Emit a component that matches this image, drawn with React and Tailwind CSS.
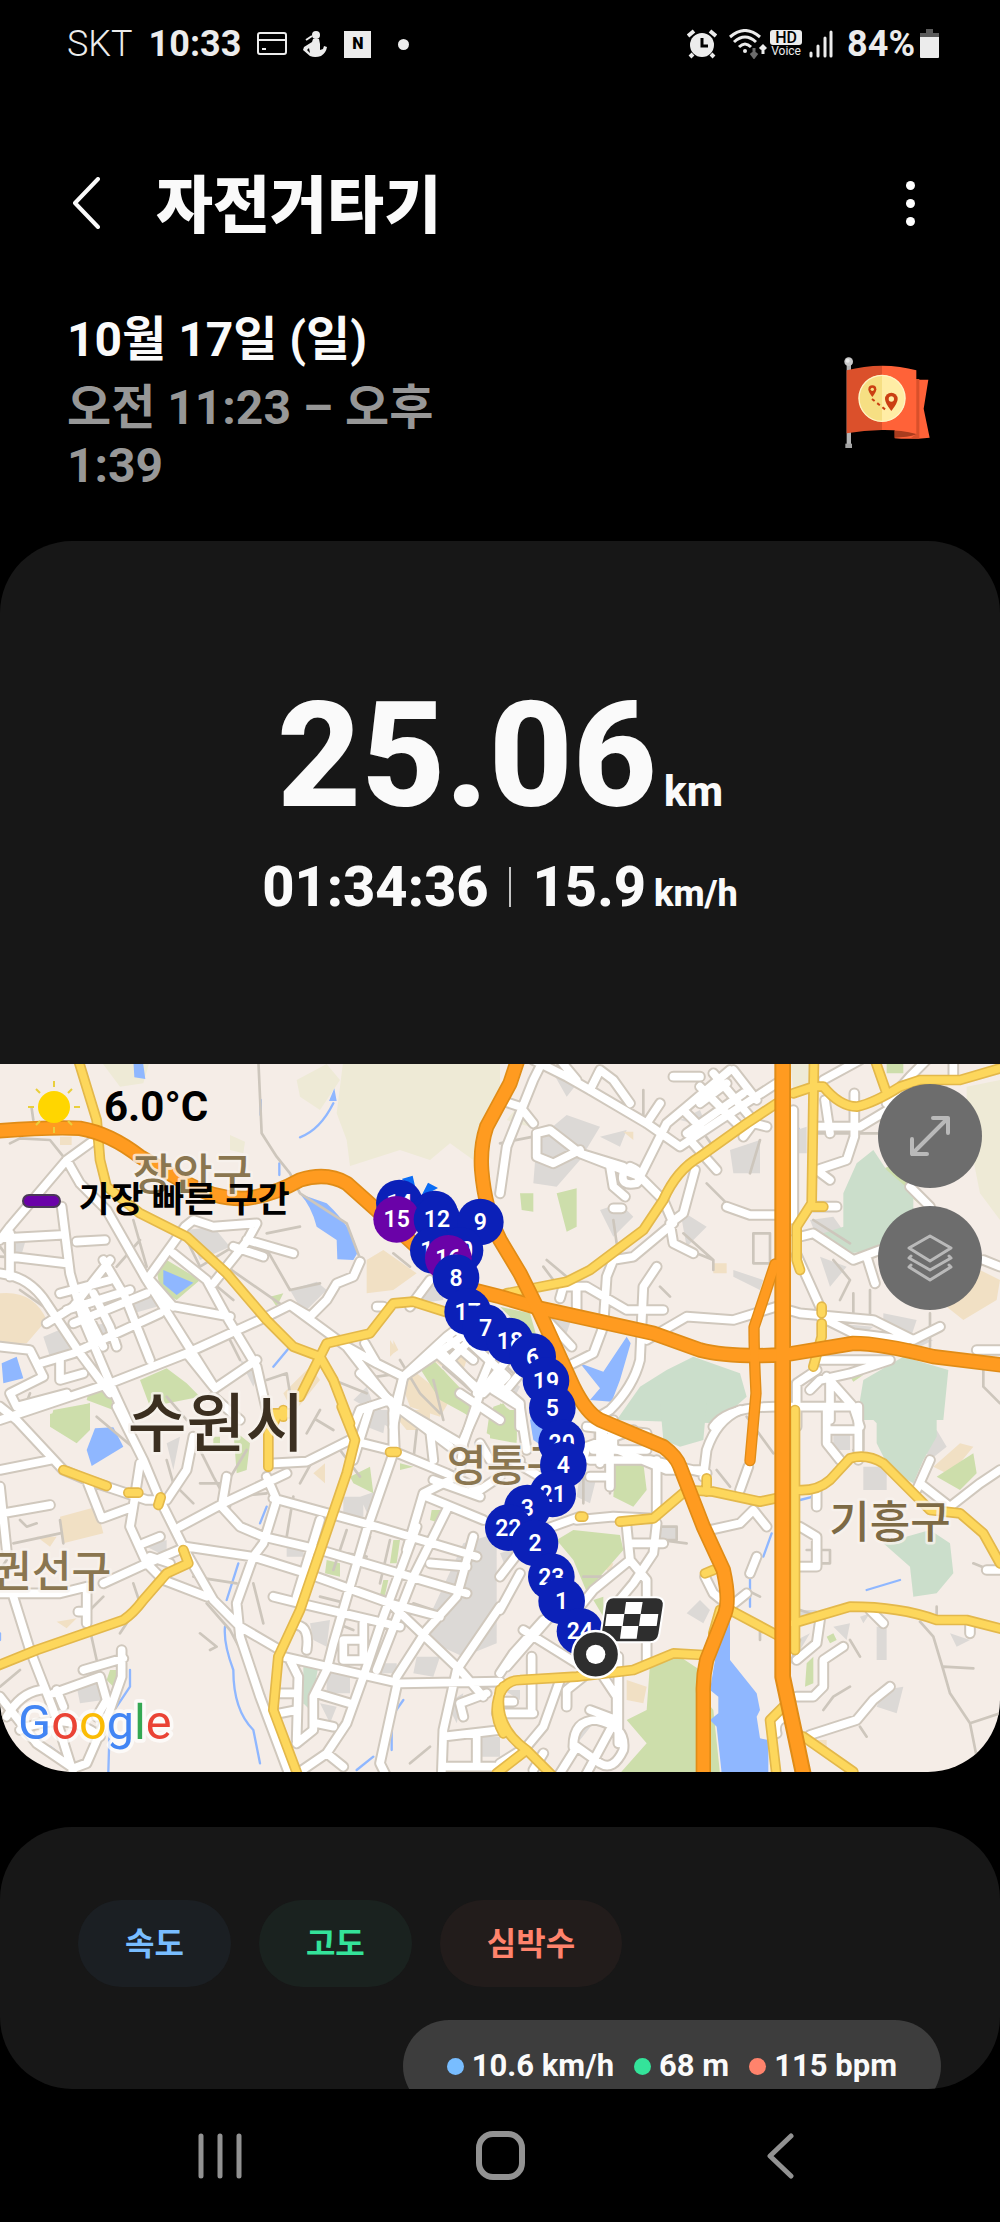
import { useState } from "react";

// The map is drawn on a 3000 x 2124 canvas that is cut into tiles
const tiles = [
  {
    at: "translate(0 -12)",
    khaki:
      "M1030 0H1500V100L1420 300 1350 250 1290 300 1200 270 1050 318 1040 240 1010 160ZM890 60L980 12 1020 60 960 150 900 110ZM300 0H450L430 70 360 80ZM690 225L735 245 730 280 690 270Z",
    tan: "M1100 600L1150 570 1250 640 1180 690 1100 700ZM0 700Q100 690 140 780L80 850 0 850ZM180 230H215V255H180ZM930 920L960 960 880 1060 850 1000ZM1340 860L1400 900 1380 960 1300 900ZM760 560L800 560 800 600ZM1180 840L1195 870 1180 880Z",
    gray: "M560 510L640 500 690 560 600 600ZM870 690L950 665 980 690 910 760ZM130 830L200 800 210 880 150 890ZM30 540L80 530 60 600ZM1250 680L1320 650 1330 720 1260 730ZM400 700L450 690 470 740 400 760ZM1090 860L1150 900 1200 930 1150 900ZM720 900L780 930 760 980ZM1060 1020L1100 980 1130 1060ZM250 800L320 790 330 840 260 850Z",
    green:
      "M1250 910L1330 930 1380 990 1430 1080 1320 1020ZM420 960L500 925 560 970 600 1010 450 1040ZM270 980L330 970 340 1050 260 1020ZM160 1050L270 1030V1090H150ZM470 630L500 600 600 660 530 720 480 690ZM810 710L850 700 830 740Z",
    forest: "",
    water:
      "M400 0H428L436 57 403 52ZM1003 85L1010 123H987ZM490 630L580 668 530 705 490 672ZM5 910L50 890 70 955 10 970ZM900 402L980 430Q1065 510 1072 580L1060 600 1012 598 1010 540 950 500Q935 440 900 402Z",
    stream: "M900 232Q960 210 1000 130M838 310V345M782 120V165M820 920L870 860",
    minor:
      "M775 0L785 220 830 290 870 340 900 400 1040 490 1078 590M900 500L800 520M870 690L960 670M680 620L860 745M790 550L870 690M30 250L60 235 150 240 190 290M95 145L100 180M0 590L200 600M0 560L30 600M640 670L700 720M560 540L600 620 700 560M400 480L440 620M350 620L420 540M800 960L860 940 870 1000M1180 580L1230 620M1380 840L1480 900M590 870L620 950M680 820L720 900M1300 960L1330 1080M1000 960L1100 1000M60 690L160 760M60 1080L90 1000M500 1010L560 1080",
    white:
      "M0 540L30 500 200 300 290 235M200 300L240 370 320 450 440 660 645 985M0 535L180 525M30 520V650M185 440L210 640 250 780 330 970 390 1100M0 640Q90 650 140 730L240 880 330 1000M140 790L220 740 330 600M310 600L375 710 450 900M440 660L555 500 580 480 640 500 770 490 740 545 680 620 640 670M230 545L315 540M30 590L200 610M520 580L620 660 680 770 770 920 800 1050M0 1080L330 970 560 880 800 770 870 735 930 770M120 910L220 880 480 760M180 700L330 660M200 750L390 690M220 790L440 700M280 700L330 800 350 860M240 720L310 860M500 735L690 770M450 660L520 740M645 985L770 900M560 880L640 980M930 770L980 720 1010 670 1060 650 1080 605M870 735L1040 860 1180 1040M1095 850L1130 910 1210 950 1340 830 1420 770M1180 1100L1210 950M1060 1100L1080 1050 1170 1020M0 860L90 870 130 950 30 1000 50 1040 200 1000M180 900V960L250 940M740 540L880 580M700 560L790 590M1230 740L1290 660M1150 740H1130M1300 870L1450 1000 1500 950M1350 840L1420 900M1040 860L1130 910M1380 1000L1500 1080M1480 880L1430 1000",
    yellow:
      "M235 0L290 180 300 300 320 380 420 460 560 530 680 640 800 780 880 860 960 890 1000 960 1050 1090M960 890L980 850 1110 820 1180 730 1240 725 1350 760M960 890L900 1010M820 1060H870",
  },
  {
    at: "translate(1500 -12)",
    khaki: "M1400 80L1500 60V480L1440 400 1400 200ZM20 180L60 130 90 200ZM870 0H930V90H880Z",
    tan: "M1340 740L1420 620 1500 660 1490 720 1390 780ZM640 610H680V640H640ZM370 215L400 215 400 240Z",
    gray: "M200 165L300 200 240 300 170 380 100 370 110 240ZM690 270L780 240V340H700ZM300 450L360 430 400 470 340 530ZM540 450L620 500 560 560ZM1150 760L1250 780 1230 840 1150 800ZM160 40L240 60 200 110ZM300 230L380 210 360 260ZM540 180L600 150 620 200ZM930 480L1000 470 1050 540 950 530ZM700 630L790 660 780 690 700 650ZM960 590L1040 620 990 680ZM890 210L920 200 920 280 890 280ZM1180 830L1260 860 1300 840ZM120 740L220 760 200 820ZM1000 790L1120 800 1080 830Z",
    green:
      "M170 400L230 385V500L200 515ZM60 400H100V455L65 450ZM1140 330L1190 310 1310 450 1290 460ZM0 740L90 760 110 830 60 800ZM1160 0H1210V40H1160ZM1050 950L1090 945 1060 965ZM0 1030L30 1050V1080H0Z",
    forest:
      "M1030 400L1070 310 1120 270 1160 330 1240 400V460L1130 570 1050 580 970 520 1030 500ZM350 1080L420 980 500 930 580 890 720 940 740 1010 650 1090ZM1090 960L1210 890 1345 930 1330 1080H1070Z",
    water: "M240 910L310 935 380 830 392 850 360 960 335 1025 270 1020 300 985Z",
    stream: "M885 205H895",
    minor:
      "M140 600L200 650M130 620L160 660M620 370L680 430M760 520H810V610H760ZM1000 600L1050 660 1020 720M1060 700V780M1110 690V780M430 90V190M340 480L350 550M0 250L100 230M950 220H1150M550 520L640 600M480 680L510 710M1290 760V860M940 480L1050 550M1450 930V980L1500 1030M560 150L640 260M750 340L780 240M590 580L640 600V630",
    white:
      "M0 400L20 260 60 160 100 60 130 0M0 120L60 140 100 190M100 0L200 50 270 90 440 190 540 260 660 180 830 70M180 0L230 60M270 90L300 30 340 60 390 130M110 220L150 210 240 280 420 350 490 420M110 220V290L160 310 240 270M240 280L370 320M370 340Q360 380 410 370Q440 340 390 320M420 350L500 190 560 140 690 30M550 150L600 200M600 80L710 190M640 40L750 170M560 220L730 100M700 30L770 120M600 130L680 70M520 50H600M330 320L340 380 375 410M340 445H365M440 190L480 130M585 330L550 460 510 490 520 550 580 580M490 420L520 490 400 590 340 600 320 650 310 800 280 880 200 920M570 240L650 330M730 230L760 190 800 200M180 715L190 680 260 680 380 750 490 750M230 680V750M470 620L430 680 420 900Q400 980 330 1050L280 1080M680 440L750 465 830 465M440 840L560 770 700 780 830 740 900 760 1120 780 1240 840 1320 800M880 150V480M950 200H1080L1180 140M1063 100V230L1040 300 950 330 990 360M970 60L1080 0M975 120L990 220M1160 130L1230 50 1280 0M1360 0V50M900 530L940 520 1060 600 1140 570M1100 590L1125 670M870 540L960 740M960 770L1060 820 1220 840M940 440H1010M1230 380L1290 440M1450 600L1500 620M890 1100V970L950 930M950 900H1170L1050 940 960 960 930 990M980 950L1060 1040 1080 1100M990 960V1080M640 1100Q680 1040 830 1040H1060M1430 870H1500M0 980L60 1030V1100M10 1000L60 940M150 790L215 860",
    yellow:
      "M20 700L200 665 270 630 430 510 490 420Q530 330 600 290L740 190 830 130M880 100L940 80H970Q1020 140 1070 140Q1120 130 1200 80L1260 60H1380L1500 25M942 0L935 430 890 500V600L900 630M1125 0L1160 100M965 740V760M965 790V830L940 920M935 440H970",
  },
  {
    at: "translate(0 1038)",
    khaki: "",
    tan: "M180 320L290 290 310 370 190 400ZM940 190L975 160V220ZM110 380H170L150 410ZM170 635L230 625 200 655ZM1170 0H1290V60H1220Z",
    gray: "M1390 400L1490 370V700L1390 740 1260 680ZM980 790H1050V850H980ZM1250 740L1320 740 1300 800 1240 790ZM930 640L990 630 980 710 940 690ZM1080 0H1180V60ZM860 410H910V440H860ZM500 100L540 80 520 180ZM440 410L500 390 500 440ZM960 880L1010 890 990 940ZM1440 980H1500V1040H1440ZM1340 880L1390 850 1370 940ZM230 830L300 820 310 870 240 880ZM1030 260H1090V320H1030ZM1080 260L1140 240 1110 330ZM1120 760H1190V790H1120Z",
    green:
      "M150 12L270 -20V60L230 100 150 50ZM700 60L750 100 740 180 710 190ZM1050 200L1110 170 1120 250 1060 220ZM1470 0H1500V90L1460 70ZM1295 300H1320V340L1290 330ZM1180 390H1200L1190 460H1170ZM1150 510H1165L1155 555H1140ZM980 450L1020 460V500L975 490ZM330 780H360L340 830 320 810ZM1200 160L1240 170 1200 180ZM640 80H660V110H640Z",
    forest: "M910 770H955L930 900 910 880Z",
    water: "M285 55L340 52 370 110 275 168 260 120Z",
    stream:
      "M715 460L680 570M675 650Q670 700 700 780Q700 900 760 960L780 1060M1210 870L1175 920V1020M390 780V830L330 920 325 1085M800 290L780 340M1120 1040L1070 1080M0 670V690M150 1010L190 1040",
    minor:
      "M500 150L520 220 580 280M580 80L640 200 690 290M600 220H680L740 120M60 330L80 350 110 340M180 330L190 400M40 400L180 370M580 500L710 520M620 580L690 660 780 830M700 260L800 250M600 670L650 710 630 720M270 660L290 750M360 670L420 580 400 520M760 520L790 640M950 130L900 220M880 260L860 380M1040 360L1000 480M1110 380L1070 500M1170 390L1140 520M960 560L1040 580M1040 430L1100 440M20 450L0 480M60 0L0 30M290 20L420 130M310 560L270 600M920 70L960 0M1020 120L1080 200M1250 60L1240 150M1300 80L1300 180M1230 1060L1290 1010M60 780L0 830M1240 580L1300 600M1010 640L1060 660M950 30L1000 60",
    white:
      "M0 180L150 150M0 -10L50 30 190 180 260 210 440 270 500 270 560 180 580 80M350 -10L430 150 480 270 560 430 640 570 720 650 840 720M260 210L305 325 400 290 420 160M400 290L390 350 440 460 490 510 620 560M540 350L670 280 860 190M680 200L665 290 720 350 790 380 960 420 1400 550M800 200L830 270 790 400 760 440 710 580 720 680 780 860 870 1100M820 265L1130 350 1430 440M560 410L760 440 920 490 1170 580 1320 620M310 520L430 465 560 410M0 550H180L260 530M40 560L90 720 160 900 220 1090M260 540V640M235 605H255M10 310L150 285M0 230L20 420M430 400L480 380M450 440L510 460M820 560L900 580 1200 650M850 740L1200 820 1500 815M820 160L920 155 1050 90 1170 120 1340 190 1440 240 1500 200M1110 -10L1060 150M1180 -10V130L1100 360 1000 700 980 780M1090 800L1040 940 980 1030 900 1085M1210 0L1380 100M1430 0L1390 90M960 330L890 560M1340 300L1240 500 1130 780M1250 350L1150 620 1090 800M1420 380L1370 560 1280 660 1190 800M1280 260L1450 330M1370 200L1270 250 1220 420M1290 460L1400 470M1170 580L1380 780 1450 860M1500 590L1370 780 1330 960 1325 1100M890 645Q930 650 920 720M870 750L895 800 890 990M840 850H890M840 910L890 900M950 850L1050 880M980 780L940 860V960L890 1000M950 940L1000 950M980 1030L1030 1070M1190 830L1140 1060 1160 1100M1330 980L1500 960M1430 970V1060M1330 1070H1500M1390 920L1380 880 1460 850M1030 690H1090V750H1030ZM1090 640V700M365 720V800L330 900 260 1060 220 1075 110 1000 0 860M250 780L370 745M160 850L300 800 320 870 290 920M20 920Q60 850 120 840M170 840L190 890M60 960Q200 900 300 980M1290 60L1300 150M640 -40L720 30",
    yellow:
      "M-10 768L110 720 370 630Q400 610 430 570L500 490 565 460 550 420M190 180L320 228M385 248H415M475 285L482 262M1025 -10L1065 90 1040 190 900 600 835 740 820 900 895 1100M805 170V70L830 20M850 0V20M1170 126H1190M1510 830Q1470 900 1510 970",
  },
  {
    at: "translate(1500 1038)",
    khaki: "",
    tan: "M410 920L480 880 550 910V970L510 1010 480 970ZM1300 170L1380 100 1420 110 1350 195ZM300 460L340 460 330 490ZM380 810L440 830 430 880 380 870ZM950 990H980V1020H950Z",
    gray: "M1090 170H1160V240H1090ZM560 610L600 570 630 600 610 640ZM1150 840L1210 830 1190 910 1130 890ZM1260 90L1310 60 1340 110 1290 150ZM0 430L60 410 20 480ZM240 190L290 200 270 280 230 260ZM480 350H530V390H480ZM1000 70H1050V120H1000ZM1350 670L1410 690 1370 710ZM1130 650H1160V750H1130ZM890 690L930 670 900 720ZM1080 620L1110 610 1090 640ZM10 840H60V870ZM900 600H950V620H900ZM220 950L280 940 240 990ZM1000 650L1050 640 1040 690Z",
    green:
      "M345 160H430L440 240 400 290 340 260ZM170 390L220 360 360 375 370 420 260 545 220 450ZM0 0H50V90H0ZM450 760L540 740 600 780V850L640 900 660 1090H360L440 1000 380 930 440 900ZM1310 200L1420 130 1430 190 1380 240ZM920 760L940 740V820L915 830ZM980 680L1000 670 1010 690 990 700ZM280 570L310 560 310 620Z",
    forest:
      "M480 -20L620 -20 610 90 540 110 490 90ZM1070 -20H1310V80L1270 150 1240 220 1170 180 1130 100V40ZM1150 400L1290 360 1350 400 1360 490 1310 550 1240 560 1230 470Z",
    water:
      "M665 600L690 625V750L770 850 780 900 770 920 780 985 805 990V1090H665L650 950 630 930 655 910V860L630 840 650 720ZM90 30L130 0V110L100 90Z",
    stream: "M815 370L790 440M750 500V590M1100 540L1200 510M900 270L940 260",
    minor:
      "M740 20L820 130M480 350H530V390H490M650 180L690 230M1260 635L1300 680 1330 780 1350 850 1410 940 1430 1040M1410 940L1500 910M1330 770L1420 775M970 900L1000 860 1050 830M1080 950L1100 980M1420 460L1470 480M1090 50V120H1060M920 420H990V460H950M250 190V280M560 400L480 390M1050 690L1080 740M1310 590V640M780 640V690M900 690L870 760M270 200H330V250M740 540L780 560M900 600L960 620M250 500L340 500",
    white:
      "M610 200L620 120Q650 30 720 0M720 240L745 170M630 360L720 340 760 300 800 350M600 180H500L330 110M400 60L260 110 250 150M270 150H450L620 190M470 150V310M330 80V230M250 110H330M270 200H330M300 60V160M230 330L340 320 450 325M240 320L100 370 0 500M380 350L390 450 280 540 200 640M470 340L460 430 400 520 350 580M390 400H490M390 450L440 510V580M615 500L640 550 690 590 740 550M770 440L750 490M885 470H950V380L900 350M1075 150V-10M980 -10V100L1020 150M980 60H1060M1250 240L1290 150M1260 220L1350 290 1440 220 1500 180M1460 480H1500M960 630L950 700 890 750M890 860H940L970 830V750L1030 710M1110 600L1150 640M1410 640V670M930 975L1070 930 1120 870 1170 830M830 970Q820 930 860 920L900 980M0 790L40 730 130 630M70 660L230 760M150 620L20 770M95 740V900M0 875H40M-10 910H100M180 810L130 950 80 1010 0 1060M200 890V840L250 800M310 800L350 860V930L270 900M355 740V1000M370 680H440V750M220 1010Q220 930 290 930Q380 950 370 1020Q340 1085 300 1060L230 1010M260 1090L330 960M180 1090L230 1010M100 1080L130 1030M950 240V290M0 600L60 490M0 130L120 200",
    yellow:
      "M0 850Q20 810 60 810L230 800 400 780 520 730 610 735M360 335L460 325 560 240 640 245 780 275 850 260M620 205V245M240 320H250M890 240Q950 245 990 210L1050 145Q1100 130 1150 160L1240 250 1290 300 1380 310 1450 370 1500 460M880 640L1050 590Q1200 590 1310 630H1400L1510 658M690 600L840 680M640 670L660 600M850 890L810 930 830 1100M910 980L1060 1085M0 840Q-20 950 80 1020L160 1100M80 1020L-10 1090M885 0V720M615 490L640 480",
  },
  {
    at: "translate(1080 288)",
    khaki: "",
    tan: "M120 660L170 640 270 720 240 770 150 740ZM90 540L110 570 90 590Z",
    gray: "M240 560L300 590 280 620 240 600ZM20 720L80 760 70 820 20 800ZM330 700L360 760 330 790ZM430 640L480 680 460 720ZM700 800L760 790 770 840 700 860Z",
    green: "M190 630L225 605 335 720 320 765 260 710ZM390 800L400 740 430 730 470 790V850L390 835Z",
    forest: "",
    water: "M510 760H545V850L520 835Z",
    stream: "",
    minor: "M120 600L180 700 240 760M250 620L330 690M50 650L120 640M420 600L470 650",
    white:
      "M320 520L130 650 100 760 105 880M230 560L360 700 310 850 300 940M300 520L440 650 400 690 480 740 500 870M360 700L440 600M270 600L330 540M0 640L110 740 270 860M360 850L390 900 480 900M220 960L360 1010M680 800L860 820M700 870H860M730 800V900M760 780V860",
    yellow: "",
  },
];

const highways = [
  "M-20 202Q150 188 240 193Q330 208 420 278L560 358Q650 408 740 403Q820 393 900 348Q980 323 1040 358L1130 438 1250 548 1420 678 1500 698 1620 733 1960 808 2100 858Q2180 880 2350 873L2560 838Q2640 838 2800 878L3020 905",
  "M1556 -20L1530 58 1460 188Q1440 248 1445 318Q1455 438 1500 528L1560 628 1620 748 1720 968Q1760 1048 1800 1068L1990 1148Q2030 1178 2040 1208L2110 1388 2170 1518Q2190 1608 2175 1648L2120 1788Q2108 1838 2110 1888V2140",
  "M2325 600L2262 790Q2262 868 2268 988L2250 1190",
];

const districts = [
  { name: "장안구", x: 578, y: 378, size: 130, color: "#8a7650" },
  { name: "수원시", x: 648, y: 1147, size: 192, color: "#3b2f20" },
  { name: "영통구", x: 1520, y: 1250, size: 130, color: "#8a7650" },
  { name: "권선구", x: 155, y: 1568, size: 130, color: "#8a7650" },
  { name: "기흥구", x: 2670, y: 1423, size: 132, color: "#7d6a45" },
];

// Kilometre pins, the ones further down lie on top
const pins = [
  { km: 14, x: 1198, y: 417 },
  { km: 13, x: 1304, y: 450 },
  { km: 15, x: 1190, y: 466, fast: true },
  { km: 12, x: 1311, y: 466 },
  { km: 9, x: 1441, y: 474 },
  { km: 10, x: 1380, y: 559 },
  { km: 11, x: 1300, y: 559 },
  { km: 16, x: 1345, y: 583, fast: true },
  { km: 8, x: 1368, y: 641 },
  { km: 17, x: 1403, y: 743 },
  { km: 7, x: 1457, y: 791 },
  { km: 18, x: 1530, y: 831 },
  { km: 6, x: 1598, y: 878 },
  { km: 19, x: 1638, y: 950 },
  { km: 5, x: 1657, y: 1032 },
  { km: 20, x: 1685, y: 1136 },
  { km: 4, x: 1690, y: 1203 },
  { km: 21, x: 1658, y: 1290 },
  { km: 3, x: 1582, y: 1332 },
  { km: 22, x: 1525, y: 1391 },
  { km: 2, x: 1605, y: 1437 },
  { km: 23, x: 1654, y: 1538 },
  { km: 1, x: 1685, y: 1611 },
  { km: 24, x: 1740, y: 1702 },
];

const Layer = ({ name, ...rest }) => (
  <g {...rest}>
    {tiles.map((tile) => (
      <path key={tile.at} transform={tile.at} d={tile[name]} />
    ))}
  </g>
);

const RouteMap = () => (
  <svg
    viewBox="0 0 3000 2124"
    className="block w-full bg-[#f5ede7] font-['Roboto','Noto_Sans_CJK_KR',sans-serif]"
    role="img"
    aria-label="경로 지도"
  >
    <Layer name="khaki" fill="#eeead6" />
    <Layer name="gray" fill="#dcd9d6" />
    <Layer name="tan" fill="#f1e0c4" />
    <Layer name="green" fill="#cddeab" />
    <Layer name="forest" fill="#cbdecb" />
    <Layer name="water" fill="#8fb7ff" />
    <g fill="none" strokeLinejoin="round" strokeLinecap="round">
      <Layer name="stream" stroke="#8fb7ff" strokeWidth="7" />
      <Layer name="minor" stroke="#cdc6bc" strokeWidth="8" />
      <Layer name="white" stroke="#d0c8bd" strokeWidth="35" />
      <Layer name="white" stroke="#ffffff" strokeWidth="23" />
      <Layer name="yellow" stroke="#e3b84b" strokeWidth="32" />
      <Layer name="yellow" stroke="#fdd75c" strokeWidth="22" />
      <g stroke="#e08c17">
        {highways.map((d) => (
          <path key={d} d={d} strokeWidth={d === highways[2] ? 34 : 46} />
        ))}
        <path d="M2348 -20V1838L2380 1988 2412 2140" strokeWidth="50" />
      </g>
      <g stroke="#ff9b20">
        {highways.map((d) => (
          <path key={d} d={d} strokeWidth={d === highways[2] ? 26 : 36} />
        ))}
        <path d="M2348 -20V1838L2380 1988 2412 2140" strokeWidth="38" />
      </g>
    </g>

    <g textAnchor="middle" fontWeight="500" stroke="#f8f3ee" strokeOpacity="0.8" strokeWidth="16" strokeLinejoin="round" paintOrder="stroke">
      {districts.map((d) => (
        <text key={d.name} x={d.x} y={d.y} fontSize={d.size} fill={d.color}>
          {d.name}
        </text>
      ))}
    </g>

    <path d="M1205 345L1238 335 1247 375ZM1262 400L1284 356 1314 372Z" fill="#0a6cf5" />
    <g textAnchor="middle" fontSize="69" fontWeight="600">
      {pins.map((pin) => (
        <g key={pin.km}>
          <circle cx={pin.x} cy={pin.y} r="70" fill={pin.fast ? "#6a02a8" : "#0b20b8"} />
          <text x={pin.x} y={pin.y + 24} fill="#ffffff">
            {pin.km}
          </text>
        </g>
      ))}
    </g>

    {/* Finish flag and start point */}
    <g transform="translate(1500 1038)">
      <path
        d="M340 562H468Q494 562 491 588L478 672Q474 697 450 697H322Q298 697 302 672L315 588Q319 562 340 562Z"
        fill="#2e2e2e"
        stroke="#ffffff"
        strokeWidth="6"
      />
      <path
        d="M378 576H428L422 612H373ZM320 612H373L368 648H315ZM422 612H475L470 648H417ZM365 648H415L410 686H360Z"
        fill="#ffffff"
      />
      <circle cx="287" cy="733" r="70" fill="#2e2e2e" stroke="#ffffff" strokeWidth="7" />
      <circle cx="287" cy="733" r="29" fill="#ffffff" />
    </g>

    <text x="54" y="2024" fontSize="146" stroke="#ffffff" strokeOpacity="0.7" strokeWidth="22" strokeLinejoin="round" paintOrder="stroke">
      <tspan fill="#4285f4">G</tspan>
      <tspan fill="#ea4335">o</tspan>
      <tspan fill="#fbbc05">o</tspan>
      <tspan fill="#4285f4">g</tspan>
      <tspan fill="#34a853">l</tspan>
      <tspan fill="#ea4335">e</tspan>
    </text>
  </svg>
);

const StatusBar = () => (
  <div className="flex h-[88px] items-center justify-between pl-[67px] pr-[61px] text-4xl text-[#ececec]">
    <div className="flex items-center">
      <span className="font-light">SKT</span>
      <span className="ml-4 font-bold">10:33</span>
      <svg className="ml-4" width="30" height="24" viewBox="0 0 30 24" fill="none" stroke="currentColor" strokeWidth="2">
        <rect x="1" y="1" width="28" height="21" rx="2" />
        <path d="M1 8H29M5 17H9" />
      </svg>
      <svg className="ml-4" width="24" height="28" viewBox="0 0 24 28" fill="currentColor">
        <circle cx="13" cy="5" r="4" />
        <path d="M10 9H16L17 14 17 20 20 19 21 16 24 17Q23 23 18 26Q12 28 7 26L0 20 1 17 9 12ZM6 18L4 20 7 23Z" fillRule="evenodd" />
        <path d="M3 10L9 6" stroke="currentColor" strokeWidth="2" />
      </svg>
      <span className="ml-[17px] flex size-[27px] items-center justify-center bg-[#ececec] text-base font-black text-black">
        N
      </span>
      <span className="ml-[27px] size-[11px] rounded-full bg-[#ececec]" />
    </div>
    <div className="flex items-center">
      <svg width="30" height="30" viewBox="0 0 30 30" fill="currentColor">
        <circle cx="15" cy="16" r="12" />
        <path d="M1 7L7 2M29 7L23 2M6 25L3 28M24 25L27 28" stroke="currentColor" strokeWidth="4" />
        <path d="M15 9V17H21" fill="none" stroke="#000000" strokeWidth="3" />
      </svg>
      <svg className="ml-3" width="38" height="30" viewBox="0 0 38 30" fill="none" stroke="currentColor" strokeWidth="3">
        <path d="M1 8Q16 -5 31 8M5 13Q16 3 27 13M10 18Q16 12 22 18" />
        <circle cx="16" cy="22" r="2" fill="currentColor" stroke="none" />
        <path d="M25 19V27M22 24L25 28 28 24" stroke="#6b6b6b" />
        <path d="M34 25V17M31 20L34 17 37 20" />
      </svg>
      <span className="ml-[3px] flex w-8 flex-col items-center">
        <span className="flex h-[15px] w-8 items-center justify-center rounded-[3px] bg-[#ececec] text-base font-medium leading-none text-black">
          HD
        </span>
        <span className="text-[12px] leading-[13px]">Voice</span>
      </span>
      <svg className="ml-[7px]" width="24" height="28" viewBox="0 0 24 28" stroke="currentColor" strokeWidth="3" strokeLinecap="round">
        <path d="M2 23V26M9 16V26M16 8V26M22 2V26" />
      </svg>
      <span className="ml-[14px] font-bold">84%</span>
      <svg className="ml-[5px]" width="19" height="30" viewBox="0 0 19 30">
        <path d="M6 0H13V4H19V9H0V4H6Z" fill="#5a5a5a" />
        <path d="M0 8H19V28Q19 29 18 29H1Q0 29 0 28Z" fill="currentColor" />
      </svg>
    </div>
  </div>
);

const RouteFlag = () => (
  <svg width="86" height="92" viewBox="0 0 258 276" role="img" aria-label="경로">
    <rect x="8" y="20" width="13" height="244" fill="#b4b4b4" />
    <circle cx="14" cy="14" r="13" fill="#c9c9c9" />
    <circle cx="11" cy="11" r="6" fill="#e8e8e8" />
    <rect x="4" y="260" width="20" height="13" fill="#a3a3a3" />
    <path d="M218 68H253L239 155 257 242Q200 248 152 244V222Z" fill="#ff6238" />
    <path d="M152 220H218V232Q190 242 152 242Z" fill="#a93c1e" />
    <path d="M216 66H226V244H200L216 232Z" fill="#d9502b" />
    <path d="M8 40Q60 26 114 26V219Q60 220 8 229Z" fill="#db502b" />
    <path d="M114 26Q170 26 217 40V231Q170 218 114 219Z" fill="#ff6238" />
    <path d="M114 54A70 70 0 0 0 114 194Z" fill="#f6df83" />
    <path d="M114 54A70 70 0 0 1 114 194Z" fill="#ffeda5" />
    <circle cx="114" cy="124" r="69" fill="none" stroke="#fff3c4" strokeWidth="4" />
    <path d="M85 120Q73 105 73 97A12 12 0 0 1 97 97Q97 105 85 120Z" fill="#cb3f12" />
    <circle cx="85" cy="97" r="5" fill="#f6df83" />
    <path d="M142 162Q123 138 123 126A19 19 0 0 1 161 126Q161 138 142 162Z" fill="#cb3f12" />
    <circle cx="142" cy="126" r="8" fill="#ffeda5" />
    <path d="M84 126L128 161" stroke="#cb3f12" strokeWidth="6" strokeDasharray="10 10" />
  </svg>
);

const chips = [
  { label: "속도", style: "bg-[#1b1f23] text-[#78bdff]" },
  { label: "고도", style: "bg-[#1a221f] text-[#34e39a]" },
  { label: "심박수", style: "bg-[#221c1b] text-[#ff836c]" },
];

const readings = [
  { text: "10.6 km/h", dot: "bg-[#78bdff]" },
  { text: "68 m", dot: "bg-[#34e39a]" },
  { text: "115 bpm", dot: "bg-[#ff836c]" },
];

export default function App() {
  const [hidden, setHidden] = useState([]);

  const toggle = (label) => {
    setHidden((prev) =>
      prev.includes(label) ? prev.filter((l) => l !== label) : [...prev, label],
    );
  };

  return (
    <div className="flex min-h-screen flex-col bg-black font-['Roboto','Noto_Sans_CJK_KR',sans-serif] text-[#fafafa]">
      <StatusBar />

      <header className="mt-[57px] flex h-[116px] items-center pl-[72px] pr-[77px]">
        <button aria-label="뒤로">
          <svg width="28" height="52" viewBox="0 0 28 52" fill="none" stroke="currentColor" strokeWidth="4" strokeLinecap="round" strokeLinejoin="round">
            <path d="M26 2L3 26 26 50" />
          </svg>
        </button>
        <h1 className="ml-[56px] flex-1 pt-2 text-[62px] font-extrabold leading-none">자전거타기</h1>
        <button aria-label="더보기" className="flex w-[26px] flex-col items-center gap-[9px]">
          <span className="size-[9px] rounded-full bg-white" />
          <span className="size-[9px] rounded-full bg-white" />
          <span className="size-[9px] rounded-full bg-white" />
        </button>
      </header>

      <section className="flex items-center justify-between pb-[46px] pl-[67px] pr-[70px] pt-[50px] text-5xl font-bold leading-[58px]">
        <div className="w-[400px]">
          <p>10월 17일 (일)</p>
          <p className="mt-[10px] text-[#979797]">오전 11:23 – 오후 1:39</p>
        </div>
        <RouteFlag />
      </section>

      <main className="flex flex-1 flex-col">
        <section className="flex flex-col items-center rounded-t-[72px] bg-[#171717] pb-[143px] pt-[156px] font-extrabold">
          <p className="flex items-baseline gap-[7px]">
            <span className="text-[146px] leading-[120px]">25.06</span>
            <span className="text-[42px] leading-none">km</span>
          </p>
          <div className="mt-9 flex items-center">
            <span className="text-[56px] leading-[68px]">01:34:36</span>
            <span className="ml-5 mr-[22px] h-10 w-[2px] bg-[#c4c4c4]" />
            <p className="flex items-baseline gap-2">
              <span className="text-[56px] leading-[68px]">15.9</span>
              <span className="text-4xl leading-none">km/h</span>
            </p>
          </div>
        </section>

        <section className="relative overflow-hidden rounded-b-[72px]">
          <RouteMap />
          <div className="absolute left-[22px] top-[17px] flex flex-col gap-12 font-bold text-black">
            <div className="flex items-center">
              <svg className="ml-[6px]" width="52" height="52" viewBox="0 0 52 52" stroke="#e9cf3c" strokeWidth="2">
                <circle cx="26" cy="26" r="16" fill="#ffd600" stroke="none" />
                <path d="M26 0V6M26 46V52M0 26H6M46 26H52M8 8L12 12M40 40L44 44M44 8L40 12M8 44L12 40" />
              </svg>
              <span className="ml-[24px] text-[42px] leading-[52px]">6.0°C</span>
            </div>
            <div className="flex items-center">
              <span className="h-[14px] w-[39px] rounded-full border-2 border-[#4b3a57] bg-[#6a02a8]" />
              <span className="ml-[18px] text-[35px] leading-10">가장 빠른 구간</span>
            </div>
          </div>
          <div className="absolute right-[18px] top-[20px] flex flex-col gap-[18px] text-[#b9b9b9]">
            <button aria-label="확대" className="flex size-[104px] items-center justify-center rounded-full bg-[#6d6d6d]">
              <svg width="44" height="44" viewBox="0 0 44 44" fill="none" stroke="currentColor" strokeWidth="4" strokeLinecap="round" strokeLinejoin="round">
                <path d="M4 40L40 4M25 4H40V19M4 25V40H19" />
              </svg>
            </button>
            <button aria-label="지도 유형" className="flex size-[104px] items-center justify-center rounded-full bg-[#6d6d6d]">
              <svg width="48" height="48" viewBox="0 0 48 48" fill="none" stroke="currentColor" strokeWidth="3" strokeLinecap="round" strokeLinejoin="round">
                <path d="M24 2L45 14 24 27 3 14ZM5 22L3 24 24 36 45 24 43 22M5 31L3 33 24 46 45 33 43 31" />
              </svg>
            </button>
          </div>
        </section>

        <section className="mt-[55px] flex h-[262px] flex-col overflow-hidden rounded-[72px] bg-[#171717] pt-[73px]">
          <div className="flex shrink-0 gap-7 px-[78px]">
            {chips.map((chip) => (
              <button
                key={chip.label}
                onClick={() => toggle(chip.label)}
                aria-pressed={!hidden.includes(chip.label)}
                className={`h-[87px] rounded-full px-[47px] text-[32px] font-bold ${chip.style}`}
              >
                {chip.label}
              </button>
            ))}
          </div>
          <div className="mr-[59px] mt-[33px] flex h-[92px] shrink-0 items-center gap-5 self-end rounded-full bg-[#3d3d3d] px-[44px] text-[31px] font-bold">
            {readings.map((r) => (
              <span key={r.text} className="flex items-center gap-2">
                <span className={`size-[17px] rounded-full ${r.dot}`} />
                {r.text}
              </span>
            ))}
          </div>
        </section>
      </main>

      <nav className="grid h-[133px] grid-cols-3 items-center justify-items-center px-20 text-[#929292]">
        <button aria-label="최근 앱">
          <svg width="44" height="46" viewBox="0 0 44 46" stroke="currentColor" strokeWidth="5" strokeLinecap="round">
            <path d="M3 3V43M22 3V43M41 3V43" />
          </svg>
        </button>
        <button aria-label="홈" className="size-[49px] rounded-[17px] border-[6px] border-[#929292]" />
        <button aria-label="이전">
          <svg width="28" height="46" viewBox="0 0 28 46" fill="none" stroke="currentColor" strokeWidth="5" strokeLinecap="round" strokeLinejoin="round">
            <path d="M25 3L4 23 25 43" />
          </svg>
        </button>
      </nav>
    </div>
  );
}
